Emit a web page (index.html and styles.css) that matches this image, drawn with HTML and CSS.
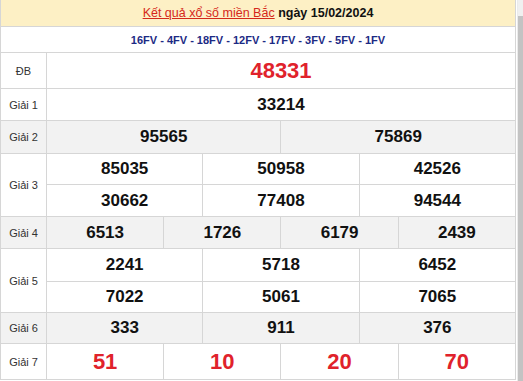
FILE: index.html
```html
<!DOCTYPE html>
<html lang="vi">
<head>
<meta charset="utf-8">
<link rel="stylesheet" href="styles.css">
</head>
<body>
<div class="page">
  <div class="main">
    <table class="kq">
      <colgroup>
        <col class="c-label">
        <col><col><col><col><col><col><col><col><col><col><col><col>
      </colgroup>
      <tr class="r-title">
        <td colspan="13"><a href="#" class="link">Kết quả xổ số miền Bắc</a> <b>ngày 15/02/2024</b></td>
      </tr>
      <tr class="r-code">
        <td colspan="13">16FV - 4FV - 18FV - 12FV - 17FV - 3FV - 5FV - 1FV</td>
      </tr>
      <tr class="r-db">
        <td class="lbl">ĐB</td>
        <td colspan="12" class="num big red">48331</td>
      </tr>
      <tr class="r h31">
        <td class="lbl">Giải 1</td>
        <td colspan="12" class="num">33214</td>
      </tr>
      <tr class="r alt h32">
        <td class="lbl">Giải 2</td>
        <td colspan="6" class="num">95565</td>
        <td colspan="6" class="num">75869</td>
      </tr>
      <tr class="r h30">
        <td class="lbl" rowspan="2">Giải 3</td>
        <td colspan="4" class="num">85035</td>
        <td colspan="4" class="num">50958</td>
        <td colspan="4" class="num">42526</td>
      </tr>
      <tr class="r h31">
        <td colspan="4" class="num">30662</td>
        <td colspan="4" class="num">77408</td>
        <td colspan="4" class="num">94544</td>
      </tr>
      <tr class="r alt h31">
        <td class="lbl">Giải 4</td>
        <td colspan="3" class="num">6513</td>
        <td colspan="3" class="num">1726</td>
        <td colspan="3" class="num">6179</td>
        <td colspan="3" class="num">2439</td>
      </tr>
      <tr class="r h32">
        <td class="lbl" rowspan="2">Giải 5</td>
        <td colspan="4" class="num">2241</td>
        <td colspan="4" class="num">5718</td>
        <td colspan="4" class="num">6452</td>
      </tr>
      <tr class="r h30">
        <td colspan="4" class="num">7022</td>
        <td colspan="4" class="num">5061</td>
        <td colspan="4" class="num">7065</td>
      </tr>
      <tr class="r alt h30">
        <td class="lbl">Giải 6</td>
        <td colspan="4" class="num">333</td>
        <td colspan="4" class="num">911</td>
        <td colspan="4" class="num">376</td>
      </tr>
      <tr class="r-g7">
        <td class="lbl">Giải 7</td>
        <td colspan="3" class="num big red">51</td>
        <td colspan="3" class="num big red">10</td>
        <td colspan="3" class="num big red">20</td>
        <td colspan="3" class="num big red">70</td>
      </tr>
    </table>
  </div>
  <div class="scrollbar"><div class="sb-arrow"></div><div class="sb-thumb"></div></div>
</div>
</body>
</html>
```
FILE: styles.css
```css
html, body {
  margin: 0;
  padding: 0;
  background: #ffffff;
}
body {
  font-family: "Liberation Sans", Arial, sans-serif;
  width: 523px;
  height: 381px;
  overflow: hidden;
}
.page {
  display: flex;
  width: 523px;
  height: 381px;
}
.main {
  width: 517px;
  flex: none;
}
.kq {
  width: 516px;
  border-collapse: collapse;
  table-layout: fixed;
}
.c-label { width: 46px; }
.kq td {
  border: 1px solid #d6d6d6;
  padding: 0;
  text-align: center;
  vertical-align: middle;
}
.r-title td {
  background: #fdf0c5;
  height: 26px;
  font-size: 12.5px;
  color: #111;
  border-top: none;
}
.link {
  color: #d5281b;
  text-decoration: underline;
}
.r-title b { font-weight: bold; color: #111; }
.r-code td {
  height: 25px;
  font-size: 11px;
  font-weight: bold;
  color: #1c2a84;
}
.r-db td { height: 35px; }
.h30 td { height: 30px; }
.h31 td { height: 31px; }
.h32 td { height: 32px; }
.r-g7 td { height: 35px; }
.alt td { background: #f2f2f2; }
.lbl {
  font-size: 11px;
  color: #333;
}
.num {
  font-size: 17px;
  font-weight: bold;
  color: #111;
}
.big { font-size: 22px; }
.red { color: #e0222b; }
.scrollbar {
  flex: none;
  width: 6px;
  border-left: 1px solid #ebebeb;
  background: #c3c3c3;
  display: flex;
  flex-direction: column;
}
.sb-arrow {
  height: 16px;
  background: #f0f0f0;
}
.sb-thumb { flex: 1; }
```
